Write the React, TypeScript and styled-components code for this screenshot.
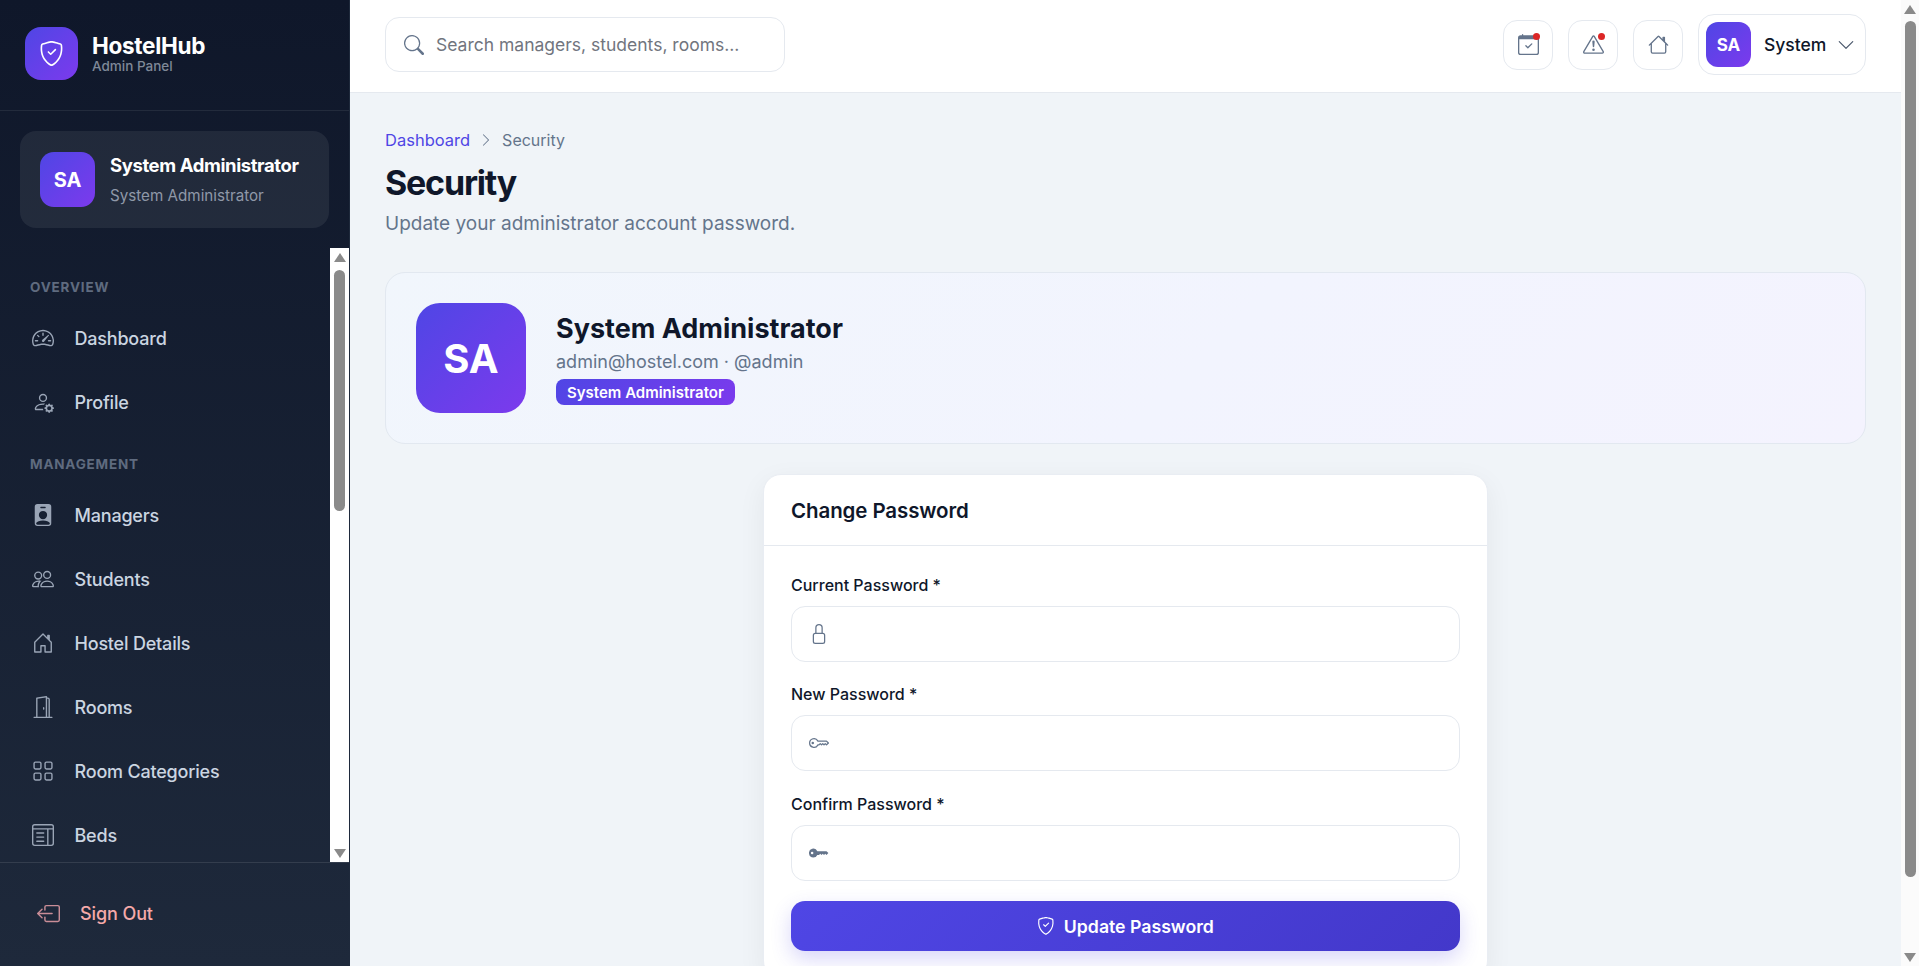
import React from "react";
import styled, { createGlobalStyle } from "styled-components";
import {
  BsBoxArrowLeft,
  BsCalendarCheck,
  BsChevronDown,
  BsChevronRight,
  BsDoorOpen,
  BsExclamationTriangle,
  BsGrid,
  BsHouse,
  BsHouseDoor,
  BsKey,
  BsKeyFill,
  BsLayoutTextWindow,
  BsLock,
  BsPeople,
  BsPersonBadgeFill,
  BsPersonGear,
  BsSearch,
  BsShieldCheck,
  BsSpeedometer2,
} from "react-icons/bs";

const brandGradient = "linear-gradient(135deg, #4f46e5 0%, #7c3aed 100%)";

const GlobalStyle = createGlobalStyle`
  html, body {
    margin: 0;
    height: 100%;
    background: #fff;
    overflow: hidden;
  }
  * {
    box-sizing: border-box;
  }
  body {
    font-family: "Inter", "Liberation Sans", sans-serif;
  }
`;

const Shell = styled.div`
  display: flex;
  height: calc(100vh - 1px);
`;

const Sidebar = styled.aside`
  width: 350px;
  flex: none;
  display: flex;
  flex-direction: column;
  background: linear-gradient(180deg, #0f172a 0%, #1e293b 100%);
  border-right: 1px solid #1e293b;
`;

const Brand = styled.div`
  height: 111px;
  flex: none;
  display: flex;
  align-items: flex-start;
  gap: 14px;
  padding: 27px 25px 0;
  border-bottom: 1px solid rgba(255, 255, 255, 0.08);
`;

const LogoMark = styled.div`
  width: 53px;
  height: 53px;
  flex: none;
  display: flex;
  align-items: center;
  justify-content: center;
  border-radius: 16px;
  background: ${brandGradient};
  color: #fff;
  font-size: 25px;
`;

const BrandText = styled.div`
  display: flex;
  flex-direction: column;
  padding-top: 6px;
`;

const BrandName = styled.div`
  color: #fff;
  font-size: 22.5px;
  line-height: 26px;
  font-weight: 700;
  letter-spacing: -0.3px;
`;

const BrandSub = styled.div`
  color: #7f8898;
  font-size: 13.5px;
  line-height: 15px;
  font-weight: 500;
`;

const UserCard = styled.div`
  flex: none;
  height: 97px;
  margin: 20px;
  padding: 0 20px;
  display: flex;
  align-items: center;
  gap: 15px;
  border-radius: 16px;
  background: rgba(255, 255, 255, 0.07);
`;

const Avatar = styled.div<{ $size: number; $radius: number; $font: number }>`
  width: ${(p) => p.$size}px;
  height: ${(p) => p.$size}px;
  flex: none;
  display: flex;
  align-items: center;
  justify-content: center;
  border-radius: ${(p) => p.$radius}px;
  background: ${brandGradient};
  color: #fff;
  font-size: ${(p) => p.$font}px;
  font-weight: 700;
`;

const UserName = styled.div`
  color: #fff;
  font-size: 18.5px;
  line-height: 24px;
  font-weight: 700;
  letter-spacing: -0.4px;
`;

const UserRole = styled.div`
  color: #8f98a8;
  font-size: 15.2px;
  line-height: 22px;
  margin-top: 8px;
`;

const NavArea = styled.div`
  flex: 1;
  min-height: 0;
  display: flex;
`;

const Nav = styled.nav`
  flex: 1;
  min-width: 0;
  padding-top: 9px;
  overflow: hidden;
`;

const NavLabel = styled.div`
  height: 16px;
  margin: 22px 0 11px;
  padding-left: 30px;
  color: #5f6b7f;
  font-size: 13.5px;
  line-height: 16px;
  font-weight: 700;
  letter-spacing: 0.8px;
`;

const NavItem = styled.a`
  height: 64px;
  display: flex;
  align-items: center;
  gap: 18.5px;
  padding-left: 30px;
  color: #cbd5e1;
  font-size: 18px;
  font-weight: 500;
  letter-spacing: -0.2px;
`;

const NavIcon = styled.span`
  width: 26px;
  flex: none;
  display: flex;
  justify-content: center;
  color: #9aa5b6;
  font-size: 22px;
`;

const Rail = styled.div<{ $width: number; $track: string }>`
  width: ${(p) => p.$width}px;
  flex: none;
  display: flex;
  flex-direction: column;
  align-items: center;
  justify-content: space-between;
  padding: 5px 0 4px;
  background: ${(p) => p.$track};
`;

const RailThumb = styled.div<{ $offset: number; $height: number }>`
  width: 11px;
  height: ${(p) => p.$height}px;
  margin-top: ${(p) => p.$offset}px;
  margin-bottom: auto;
  border-radius: 6px;
  background: #8a8a8a;
`;

const RailArrow = styled.div<{ $down?: boolean }>`
  width: 0;
  height: 0;
  flex: none;
  border-left: 6.5px solid transparent;
  border-right: 6.5px solid transparent;
  border-bottom: ${(p) => (p.$down ? "0" : "9px solid #8a8a8a")};
  border-top: ${(p) => (p.$down ? "9px solid #8a8a8a" : "0")};
`;

const SidebarFooter = styled.div`
  flex: none;
  height: 104px;
  display: flex;
  align-items: center;
  gap: 20px;
  padding: 0 0 2px 37px;
  border-top: 1px solid rgba(255, 255, 255, 0.1);
  color: #f5a9a9;
  font-size: 18px;
  font-weight: 500;
  letter-spacing: -0.1px;

  svg {
    font-size: 23px;
    color: #c98d97;
  }
`;

const Scroller = styled.div`
  flex: 1;
  min-width: 0;
  overflow: hidden;
  background: #f0f4f8;
`;

const Topbar = styled.header`
  height: 93px;
  display: flex;
  align-items: center;
  justify-content: space-between;
  padding: 0 35px 3px;
  background: #fff;
  border-bottom: 1px solid #e5e9ef;
`;

const SearchBox = styled.div`
  width: 400px;
  height: 55px;
  display: flex;
  align-items: center;
  gap: 12px;
  padding: 0 18px;
  border: 1px solid #e5e9ef;
  border-radius: 14px;
  color: #64748b;
  font-size: 20px;
`;

const SearchInput = styled.input`
  flex: 1;
  min-width: 0;
  border: 0;
  outline: 0;
  padding: 0;
  background: none;
  font: inherit;
  font-size: 17.5px;
  color: #334155;

  &::placeholder {
    color: #71757e;
    opacity: 1;
  }
`;

const TopActions = styled.div`
  display: flex;
  align-items: center;
  gap: 15px;
`;

const IconButton = styled.button`
  position: relative;
  width: 50px;
  height: 50px;
  padding: 0;
  display: flex;
  align-items: center;
  justify-content: center;
  background: #fff;
  border: 1px solid #e5e9ef;
  border-radius: 14px;
  color: #64748b;
  font-size: 21px;
`;

const Dot = styled.span`
  position: absolute;
  top: 12px;
  right: 12px;
  width: 7px;
  height: 7px;
  border-radius: 50%;
  background: #dc2626;
`;

const UserMenu = styled.div`
  width: 168px;
  height: 61px;
  display: flex;
  align-items: center;
  padding: 0 10px 0 7px;
  background: #fff;
  border: 1px solid #e5e9ef;
  border-radius: 16px;
  color: #0f172a;
  font-size: 17.5px;
  font-weight: 500;

  svg {
    margin-left: auto;
    font-size: 18px;
    color: #475569;
  }
`;

const UserMenuName = styled.span`
  margin-left: 13px;
`;

const Page = styled.main`
  padding: 35px 35px 0;
`;

const Crumbs = styled.div`
  height: 24px;
  display: flex;
  align-items: center;
  gap: 9px;
  color: #64748b;
  font-size: 16.5px;
  line-height: 24px;

  svg {
    font-size: 14px;
  }
`;

const CrumbLink = styled.a`
  color: #4f46e5;
`;

const CrumbCurrent = styled.span`
  font-size: 16px;
`;

const Title = styled.h1`
  margin: 9px 0 0;
  color: #0f172a;
  font-size: 34px;
  line-height: 44px;
  font-weight: 700;
  letter-spacing: -1.2px;
`;

const Subtitle = styled.p`
  margin: 5px 0 0;
  color: #64748b;
  font-size: 19px;
  line-height: 28px;
`;

const Banner = styled.section`
  margin-top: 34px;
  padding: 30px;
  display: flex;
  align-items: center;
  gap: 30px;
  border: 1px solid #e2e8f0;
  border-radius: 20px;
  background: linear-gradient(135deg, #f1f6fc 0%, #f2f4fe 55%, #f4f3fe 100%);
`;

const BannerName = styled.h2`
  margin: 1px 0 0;
  color: #0f172a;
  font-size: 27px;
  line-height: 34px;
  font-weight: 700;
`;

const BannerMail = styled.div`
  margin-top: 4px;
  color: #64748b;
  font-size: 18px;
  line-height: 24px;
`;

const RoleBadge = styled.span`
  display: inline-flex;
  align-items: center;
  height: 26px;
  margin-top: 5px;
  padding: 0 11px;
  border-radius: 8px;
  background: ${brandGradient};
  color: #fff;
  font-size: 15px;
  font-weight: 600;
`;

const Card = styled.section`
  width: 725px;
  margin: 30px auto 0;
  background: #fff;
  border: 1px solid #e9edf3;
  border-radius: 18px;
  box-shadow: 0 8px 28px rgba(15, 23, 42, 0.06);
`;

const CardHeader = styled.div`
  height: 71px;
  display: flex;
  align-items: center;
  padding: 0 27px;
  border-bottom: 1px solid #e5e9ef;
  color: #0f172a;
  font-size: 20.5px;
  font-weight: 600;
  letter-spacing: -0.1px;
`;

const Form = styled.form`
  padding: 26.5px 27px 27px;
  display: flex;
  flex-direction: column;
  gap: 20.5px;
`;

const Field = styled.div`
  display: flex;
  flex-direction: column;
  gap: 9px;
`;

const Label = styled.label`
  color: #0f172a;
  font-size: 16px;
  line-height: 24px;
  font-weight: 500;
`;

const InputWrap = styled.div`
  position: relative;
  color: #64748b;
  font-size: 20px;

  svg {
    position: absolute;
    left: 18px;
    top: 18px;
  }
`;

const Input = styled.input`
  display: block;
  width: 100%;
  height: 56px;
  padding: 0 16px 0 52px;
  background: #fff;
  border: 1px solid #e5e9ef;
  border-radius: 14px;
  outline: 0;
  font: inherit;
`;

const SubmitButton = styled.button`
  height: 50px;
  display: flex;
  align-items: center;
  justify-content: center;
  gap: 9px;
  border: 0;
  border-radius: 14px;
  background: linear-gradient(135deg, #4f46e5 0%, #4338ca 100%);
  box-shadow: 0 8px 20px rgba(79, 70, 229, 0.22);
  color: #fff;
  font: inherit;
  font-size: 17.7px;
  font-weight: 600;
`;

type NavEntry = { label: string; icon: React.ReactNode };
type NavGroup = { title: string; items: NavEntry[] };

const navGroups: NavGroup[] = [
  {
    title: "OVERVIEW",
    items: [
      { label: "Dashboard", icon: <BsSpeedometer2 /> },
      { label: "Profile", icon: <BsPersonGear /> },
    ],
  },
  {
    title: "MANAGEMENT",
    items: [
      { label: "Managers", icon: <BsPersonBadgeFill /> },
      { label: "Students", icon: <BsPeople /> },
      { label: "Hostel Details", icon: <BsHouseDoor /> },
      { label: "Rooms", icon: <BsDoorOpen /> },
      { label: "Room Categories", icon: <BsGrid /> },
      { label: "Beds", icon: <BsLayoutTextWindow /> },
    ],
  },
];

const passwordFields = [
  { id: "current", label: "Current Password *", icon: <BsLock /> },
  { id: "next", label: "New Password *", icon: <BsKey /> },
  { id: "confirm", label: "Confirm Password *", icon: <BsKeyFill /> },
];

export default function App() {
  return (
    <>
      <GlobalStyle />
      <Shell>
        <Sidebar>
          <Brand>
            <LogoMark>
              <BsShieldCheck />
            </LogoMark>
            <BrandText>
              <BrandName>HostelHub</BrandName>
              <BrandSub>Admin Panel</BrandSub>
            </BrandText>
          </Brand>
          <UserCard>
            <Avatar $size={55} $radius={14} $font={20}>
              SA
            </Avatar>
            <div>
              <UserName>System Administrator</UserName>
              <UserRole>System Administrator</UserRole>
            </div>
          </UserCard>
          <NavArea>
            <Nav>
              {navGroups.map((group) => (
                <div key={group.title}>
                  <NavLabel>{group.title}</NavLabel>
                  {group.items.map((item) => (
                    <NavItem key={item.label}>
                      <NavIcon>{item.icon}</NavIcon>
                      {item.label}
                    </NavItem>
                  ))}
                </div>
              ))}
            </Nav>
            <Rail $width={19} $track="#fff">
              <RailArrow />
              <RailThumb $offset={8} $height={241} />
              <RailArrow $down />
            </Rail>
          </NavArea>
          <SidebarFooter>
            <BsBoxArrowLeft />
            Sign Out
          </SidebarFooter>
        </Sidebar>
        <Scroller>
          <Topbar>
            <SearchBox>
              <BsSearch />
              <SearchInput placeholder="Search managers, students, rooms..." />
            </SearchBox>
            <TopActions>
              <IconButton>
                <BsCalendarCheck />
                <Dot />
              </IconButton>
              <IconButton>
                <BsExclamationTriangle />
                <Dot />
              </IconButton>
              <IconButton>
                <BsHouse />
              </IconButton>
              <UserMenu>
                <Avatar $size={45} $radius={12} $font={17}>
                  SA
                </Avatar>
                <UserMenuName>System</UserMenuName>
                <BsChevronDown />
              </UserMenu>
            </TopActions>
          </Topbar>
          <Page>
            <Crumbs>
              <CrumbLink>Dashboard</CrumbLink>
              <BsChevronRight />
              <CrumbCurrent>Security</CrumbCurrent>
            </Crumbs>
            <Title>Security</Title>
            <Subtitle>Update your administrator account password.</Subtitle>
            <Banner>
              <Avatar $size={110} $radius={24} $font={40}>
                SA
              </Avatar>
              <div>
                <BannerName>System Administrator</BannerName>
                <BannerMail>admin@hostel.com · @admin</BannerMail>
                <RoleBadge>System Administrator</RoleBadge>
              </div>
            </Banner>
            <Card>
              <CardHeader>Change Password</CardHeader>
              <Form>
                {passwordFields.map((field) => (
                  <Field key={field.id}>
                    <Label htmlFor={field.id}>{field.label}</Label>
                    <InputWrap>
                      {field.icon}
                      <Input id={field.id} type="password" />
                    </InputWrap>
                  </Field>
                ))}
                <SubmitButton type="button">
                  <BsShieldCheck />
                  Update Password
                </SubmitButton>
              </Form>
            </Card>
          </Page>
        </Scroller>
        <Rail $width={18} $track="#fbfbfb">
          <RailArrow />
          <RailThumb $offset={7} $height={856} />
          <RailArrow $down />
        </Rail>
      </Shell>
    </>
  );
}
